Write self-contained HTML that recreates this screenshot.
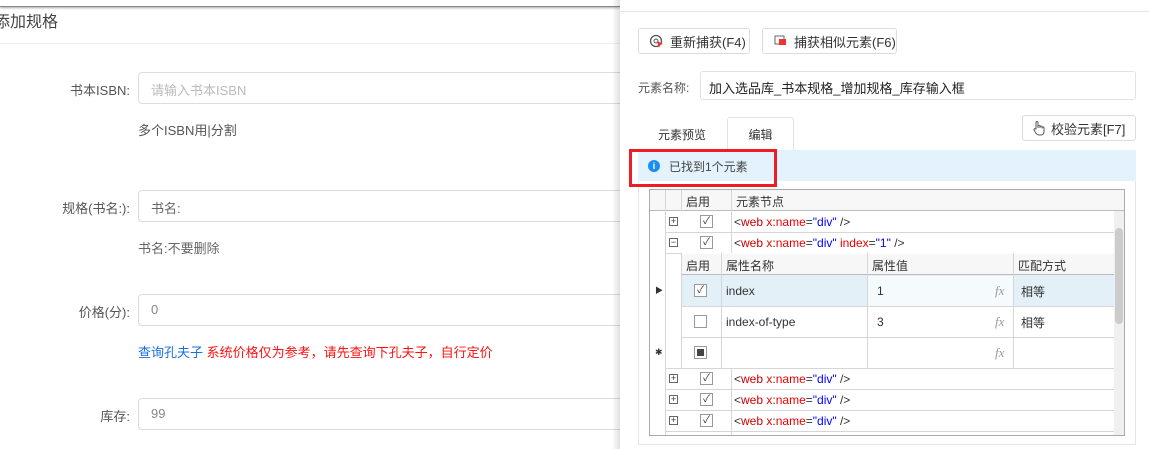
<!DOCTYPE html>
<html><head><meta charset="utf-8"><style>
*{box-sizing:border-box;margin:0;padding:0}
body{width:1149px;height:449px;overflow:hidden;background:#fff;font-family:"Liberation Sans","Noto Sans CJK SC",sans-serif;position:relative;color:#333}
.a{position:absolute}
.inp{position:absolute;left:138px;width:500px;height:32px;border:1px solid #dcdcdc;border-radius:4px;font-size:13px;color:#888;padding:7px 12px}
.lbl{position:absolute;font-size:13px;color:#555;text-align:right;width:130px;left:0}
.btn{position:absolute;border:1px solid #dcdcdc;border-radius:3px;background:#fff;font-size:13px;color:#333;display:flex;align-items:center;padding-left:10px;gap:5px}
.g{position:absolute;border-color:#d6d6d6;border-style:solid;border-width:0}
.t{position:absolute;font-size:12px;white-space:nowrap}
.cb{position:absolute;width:13px;height:13px;border:1px solid #999;background:#fff;font-size:10px;line-height:11px;text-align:center;color:#333}
.pl{position:absolute;width:9px;height:9px;border:1px solid #666;font-size:9px;line-height:7px;text-align:center;color:#333}
.r{color:#c00}.rr{color:#e00}.b{color:#00f}
</style></head><body>
<div class="a" style="left:0;top:0;width:620px;height:7px;background:#fff;border-bottom:1px solid #888;box-shadow:0 1px 2px #aaa"></div>
<div class="t" style="left:-6px;top:8px;font-size:16px;color:#444">添加规格</div>
<div class="a" style="left:0;top:43px;width:620px;height:1px;background:#eee"></div>
<div class="lbl" style="top:80px">书本ISBN:</div>
<div class="inp" style="top:72px;color:#bbb">请输入书本ISBN</div>
<div class="t" style="left:138px;top:120px;font-size:13px;color:#555">多个ISBN用|分割</div>
<div class="lbl" style="top:198px">规格(书名:):</div>
<div class="inp" style="top:190px;color:#666">书名:</div>
<div class="t" style="left:138px;top:238px;font-size:13px;color:#666">书名:不要删除</div>
<div class="lbl" style="top:302px">价格(分):</div>
<div class="inp" style="top:294px">0</div>
<div class="t" style="left:138px;top:342px;font-size:13px"><span style="color:#1a6fe0">查询孔夫子</span> <span style="color:#f11">系统价格仅为参考，请先查询下孔夫子，自行定价</span></div>
<div class="lbl" style="top:406px">库存:</div>
<div class="inp" style="top:398px">99</div>
<div class="a" style="left:612px;top:0;width:8px;height:449px;background:linear-gradient(to right,rgba(0,0,0,0),rgba(0,0,0,.12))"></div>
<div class="a" style="left:620px;top:0;width:529px;height:449px;background:#fff"></div>
<div class="a" style="left:620px;top:11px;width:529px;height:1px;background:#e6e6e6"></div>
<div class="btn" style="left:638px;top:28px;width:112px;height:26px"><svg width="16" height="16" viewBox="0 0 16 16"><circle cx="7" cy="8" r="5.5" fill="none" stroke="#555" stroke-width="1.3"/><circle cx="7" cy="8" r="2" fill="none" stroke="#555"/><path d="M8 8l6 3-3 1-1 3z" fill="#e33"/></svg>重新捕获(F4)</div>
<div class="btn" style="left:762px;top:28px;width:135px;height:26px"><svg width="16" height="16" viewBox="0 0 16 16"><rect x="2" y="3" width="9" height="8" fill="none" stroke="#666"/><rect x="6" y="6" width="7" height="6" fill="#e33"/></svg>捕获相似元素(F6)</div>
<div class="t" style="left:638px;top:79px;font-size:12px;color:#555">元素名称:</div>
<div class="a" style="left:700px;top:71px;width:436px;height:29px;border:1px solid #e2e2e2;border-radius:3px;font-size:13px;padding:6px 8px;color:#222">加入选品库_书本规格_增加规格_库存输入框</div>
<div class="t" style="left:658px;top:126px;font-size:12px;color:#333">元素预览</div>
<div class="a" style="left:727px;top:117px;width:67px;height:34px;border:1px solid #e2e2e2;border-bottom:none;border-radius:3px 3px 0 0;background:#fff;font-size:12px;text-align:center;padding-top:8px">编辑</div>
<div class="btn" style="left:1022px;top:115px;width:114px;height:26px;padding-left:9px"><svg width="14" height="16" viewBox="0 0 14 16"><path d="M4 9V2.5a1 1 0 0 1 2 0V8V6.5a1 1 0 0 1 2 0V8V7a1 1 0 0 1 2 0v1.5V8a1 1 0 0 1 2 0v3.5C12 14 10.5 15 8.5 15H7C5.5 15 4.5 14 3.5 12.5L2 10a1 1 0 0 1 1.7-1z" fill="none" stroke="#555" stroke-width="1"/></svg>校验元素[F7]</div>
<div class="a" style="left:638px;top:150px;width:498px;height:31px;background:#e3f2fc"></div>
<div class="a" style="left:638px;top:181px;width:498px;height:264px;border:1px solid #e6e6e6;border-top:none"></div>
<div class="a" style="left:648px;top:160px;width:12px;height:12px;border-radius:50%;background:#1b8ff0;color:#fff;font-size:9px;text-align:center;line-height:12px;font-weight:bold">i</div>
<div class="t" style="left:669px;top:158px;font-size:12px;color:#444">已找到1个元素</div>
<div class="a" style="left:629px;top:149px;width:148px;height:38px;border:3px solid #ee1c24"></div>
<div class="a" style="left:649px;top:189px;width:476px;height:247px;border:1px solid #aaa;background:#fff"></div>
<div class="a" style="left:650px;top:190px;width:474px;height:21px;background:#f7f7f7;border-bottom:1px solid #bbb"></div>
<div class="g" style="left:665px;top:190px;height:245px;border-left-width:1px"></div>
<div class="g" style="left:681px;top:190px;height:21px;border-left-width:1px"></div>
<div class="g" style="left:731px;top:190px;height:63px;border-left-width:1px"></div>
<div class="g" style="left:731px;top:368px;height:67px;border-left-width:1px"></div>
<div class="t" style="left:686px;top:193px">启用</div>
<div class="t" style="left:736px;top:193px">元素节点</div>
<div class="a" style="left:1114px;top:211px;width:10px;height:224px;background:#f0f0f0"></div>
<div class="a" style="left:1115px;top:228px;width:8px;height:96px;background:#ccc;border-radius:4px"></div>
<div class="g" style="left:665px;top:232px;width:449px;border-top-width:1px"></div>
<div class="g" style="left:665px;top:253px;width:16px;border-top-width:1px"></div>
<div class="g" style="left:665px;top:368px;width:449px;border-top-width:1px"></div>
<div class="g" style="left:665px;top:389px;width:449px;border-top-width:1px"></div>
<div class="g" style="left:665px;top:410px;width:449px;border-top-width:1px"></div>
<div class="g" style="left:665px;top:431px;width:449px;border-top-width:1px"></div>
<div class="pl" style="left:669px;top:217px">+</div><div class="cb" style="left:700px;top:215px">✓</div>
<div class="t" style="left:734px;top:215px">&lt;<span class="r">web</span> <span class="rr">x</span>:<span class="rr">name</span>=<span class="b">"div"</span> /&gt;</div>
<div class="pl" style="left:669px;top:238px">−</div><div class="cb" style="left:700px;top:236px">✓</div>
<div class="t" style="left:734px;top:236px">&lt;<span class="r">web</span> <span class="rr">x</span>:<span class="rr">name</span>=<span class="b">"div"</span> <span class="rr">index</span>=<span class="b">"1"</span> /&gt;</div>
<div class="a" style="left:681px;top:253px;width:433px;height:115px;border-left:1px solid #d6d6d6"></div>
<div class="a" style="left:682px;top:254px;width:432px;height:21px;background:#f7f7f7;border-bottom:1px solid #bbb"></div>
<div class="a" style="left:682px;top:275px;width:432px;height:31px;background:#e4f0f8"></div>
<div class="a" style="left:867px;top:276px;width:146px;height:30px;background:#f5fafd"></div>
<div class="g" style="left:721px;top:253px;height:115px;border-left-width:1px"></div>
<div class="g" style="left:867px;top:253px;height:115px;border-left-width:1px"></div>
<div class="g" style="left:1013px;top:253px;height:115px;border-left-width:1px"></div>
<div class="g" style="left:681px;top:306px;width:433px;border-top-width:1px"></div>
<div class="g" style="left:681px;top:337px;width:433px;border-top-width:1px"></div>
<div class="t" style="left:686px;top:257px">启用</div>
<div class="t" style="left:726px;top:257px">属性名称</div>
<div class="t" style="left:872px;top:257px">属性值</div>
<div class="t" style="left:1018px;top:257px">匹配方式</div>
<div class="t" style="left:655px;top:285px;font-size:8px">▶</div>
<div class="cb" style="left:694px;top:284px">✓</div>
<div class="t" style="left:726px;top:284px">index</div><div class="t" style="left:877px;top:284px">1</div>
<div class="t" style="left:995px;top:283px;color:#999;font-style:italic;font-family:'Liberation Serif',serif;font-size:13px">fx</div>
<div class="t" style="left:1021px;top:283px">相等</div>
<div class="cb" style="left:694px;top:315px"></div>
<div class="t" style="left:726px;top:315px">index-of-type</div><div class="t" style="left:877px;top:315px">3</div>
<div class="t" style="left:995px;top:314px;color:#999;font-style:italic;font-family:'Liberation Serif',serif;font-size:13px">fx</div>
<div class="t" style="left:1021px;top:314px">相等</div>
<div class="t" style="left:655px;top:347px;font-size:9px">✱</div>
<div class="cb" style="left:694px;top:346px;padding:2px"><div style="width:7px;height:7px;background:#444"></div></div>
<div class="t" style="left:995px;top:345px;color:#999;font-style:italic;font-family:'Liberation Serif',serif;font-size:13px">fx</div>
<div class="pl" style="left:669px;top:374px">+</div><div class="cb" style="left:700px;top:372px">✓</div>
<div class="t" style="left:734px;top:372px">&lt;<span class="r">web</span> <span class="rr">x</span>:<span class="rr">name</span>=<span class="b">"div"</span> /&gt;</div>
<div class="pl" style="left:669px;top:395px">+</div><div class="cb" style="left:700px;top:393px">✓</div>
<div class="t" style="left:734px;top:393px">&lt;<span class="r">web</span> <span class="rr">x</span>:<span class="rr">name</span>=<span class="b">"div"</span> /&gt;</div>
<div class="pl" style="left:669px;top:416px">+</div><div class="cb" style="left:700px;top:414px">✓</div>
<div class="t" style="left:734px;top:414px">&lt;<span class="r">web</span> <span class="rr">x</span>:<span class="rr">name</span>=<span class="b">"div"</span> /&gt;</div>
</body></html>
